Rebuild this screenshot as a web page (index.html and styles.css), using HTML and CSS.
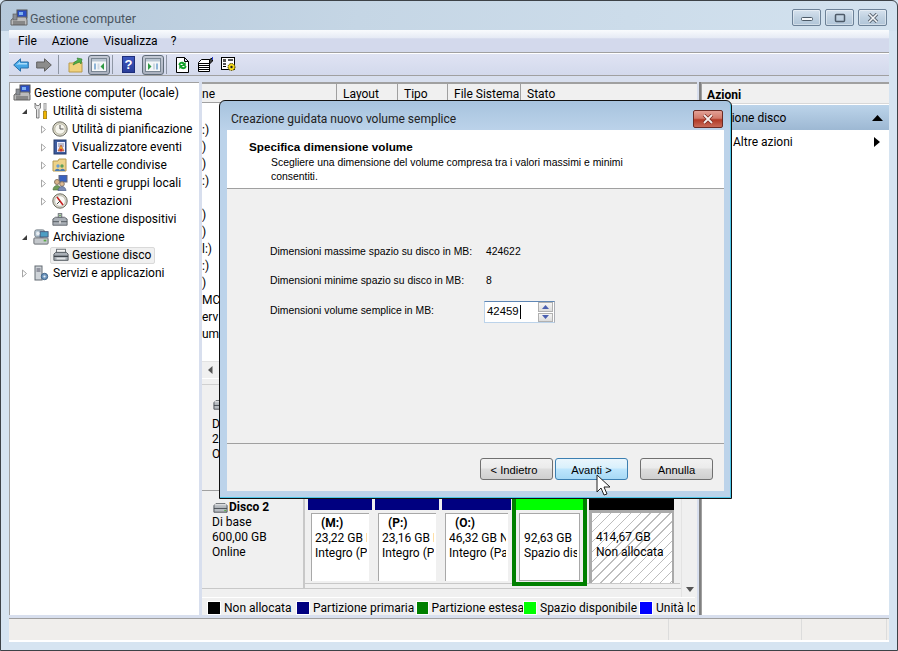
FILE: index.html
```html
<!DOCTYPE html>
<html lang="it">
<head>
<meta charset="utf-8">
<title>Gestione computer</title>
<link rel="stylesheet" href="styles.css">
</head>
<body>
<svg class="sprite" width="0" height="0" aria-hidden="true">
  <symbol id="i-pc" viewBox="0 0 18 18">
    <rect x="7" y="1" width="10" height="8" fill="#2b4fc4" stroke="#555"/>
    <rect x="9" y="3" width="4" height="3" fill="#7fb2f0"/>
    <path d="M1 11l4-3h11l1 3v5H1z" fill="#bbb" stroke="#666"/>
    <rect x="3" y="5" width="4" height="6" fill="#8a8f96" stroke="#555" stroke-width=".6"/>
    <path d="M3 13h12M3 15h12" stroke="#555"/>
  </symbol>
  <symbol id="i-tools" viewBox="0 0 16 16">
    <path d="M2 0v5l1.500 1.500V15h2.500V6.500L7.500 5V0L6 2.500H3.500z" fill="#e4e4e4" stroke="#666" stroke-width=".8"/>
    <path d="M11 0h2v7h-2z" fill="#eee" stroke="#777" stroke-width=".7"/>
    <path d="M10.500 8h3v8h-3z" fill="#f0b400" stroke="#8a6a00" stroke-width=".7"/>
  </symbol>
  <symbol id="i-clock" viewBox="0 0 16 16">
    <circle cx="8" cy="8" r="7.200" fill="#dbd8c8" stroke="#6d6d62"/>
    <circle cx="8" cy="8" r="5.200" fill="#f7f6ee" stroke="#a5a28f" stroke-width=".6"/>
    <path d="M8 4v4h3.500" fill="none" stroke="#555" stroke-width="1"/>
  </symbol>
  <symbol id="i-log" viewBox="0 0 16 16">
    <rect x="2" y="1" width="12" height="14" fill="#3d5c9e" stroke="#243a6c"/>
    <rect x="5" y="3" width="8" height="10" fill="#eef"/>
    <path d="M6 5h6M6 7h6" stroke="#889"/>
    <path d="M9 6l3 6H6z" fill="#f2c230" stroke="#a33" stroke-width=".6"/>
    <circle cx="9" cy="11" r="1.600" fill="#c33"/>
  </symbol>
  <symbol id="i-share" viewBox="0 0 16 16">
    <path d="M1 4h5l1-2h7v12H1z" fill="#eed389" stroke="#b59a50"/>
    <circle cx="6" cy="9" r="1.700" fill="#6a9fd0"/>
    <circle cx="10" cy="9" r="1.700" fill="#5ca05c"/>
    <path d="M3 14c0-3 5-3 5 0zM8 14c0-3 5-3 5 0z" fill="#4a7ab0"/>
  </symbol>
  <symbol id="i-users" viewBox="0 0 16 16">
    <rect x="7" y="0" width="8" height="7" fill="#3a63c0" stroke="#667"/>
    <circle cx="5" cy="7" r="2.500" fill="#d8b48a" stroke="#876"/>
    <path d="M1 15c0-6 8-6 8 0z" fill="#6f9c5a" stroke="#4a6a3a" stroke-width=".6"/>
    <circle cx="10" cy="9" r="2.300" fill="#e0bd95" stroke="#876"/>
    <path d="M6 16c0-6 8-6 8 0z" fill="#7c8cb4" stroke="#4c5a80" stroke-width=".6"/>
  </symbol>
  <symbol id="i-perf" viewBox="0 0 16 16">
    <circle cx="8" cy="8" r="7.200" fill="#d9d6c6" stroke="#6d6d62"/>
    <circle cx="8" cy="8" r="5.300" fill="#fbfaf5" stroke="#aaa" stroke-width=".6"/>
    <path d="M5 4l6 8" stroke="#c62020" stroke-width="1.500"/>
    <path d="M5 11l3-3" stroke="#444"/>
  </symbol>
  <symbol id="i-dev" viewBox="0 0 18 16">
    <path d="M1 8l3-2h10l3 2v7H1z" fill="#a9afb6" stroke="#5c6268"/>
    <path d="M1 11h16" stroke="#4f555b"/>
    <rect x="7" y="2" width="4" height="4" fill="#dfe3e8" stroke="#5c6268"/>
    <rect x="8" y="10" width="2" height="3" fill="#d8d8d8"/>
    <circle cx="9" cy="4" r="1" fill="#5a9c4a"/>
  </symbol>
  <symbol id="i-printer" viewBox="0 0 18 16">
    <rect x="4" y="1.500" width="10" height="4" fill="#f4f4f4" stroke="#5c6268"/>
    <path d="M1 7l2-2h12l2 2v7H1z" fill="#a9afb6" stroke="#4c5258"/>
    <path d="M1 9.500h16" stroke="#3f454b" stroke-width="1.500"/>
    <rect x="4" y="11" width="10" height="2" fill="#e2e4e6"/>
  </symbol>
  <symbol id="i-store" viewBox="0 0 18 18">
    <rect x="1" y="10" width="16" height="7" rx="1" fill="#c3c7cb" stroke="#5c6268"/>
    <rect x="12" y="12" width="3" height="2" fill="#5cab4a"/>
    <rect x="2" y="1" width="11" height="8" rx="2" fill="#b8c9d6" stroke="#68737c"/>
    <rect x="8" y="3" width="9" height="6" fill="#4d9ec4" stroke="#457"/>
    <circle cx="5.500" cy="5" r="2" fill="#e8eef2"/>
  </symbol>
  <symbol id="i-disk" viewBox="0 0 18 16">
    <path d="M2 6l2-2h10l2 2v7H2z" fill="#b7bcc1" stroke="#4c5157"/>
    <path d="M2 9h14" stroke="#444a50"/>
    <path d="M3 5h12" stroke="#eee"/>
    <rect x="13" y="10.500" width="2" height="1.500" fill="#58b04a"/>
  </symbol>
  <symbol id="i-serv" viewBox="0 0 16 16">
    <rect x="2" y="1" width="7" height="14" fill="#cfd4d9" stroke="#636a72"/>
    <path d="M3.500 4h4M3.500 6h4" stroke="#556"/>
    <circle cx="11.500" cy="11.500" r="3.200" fill="#6f97bf" stroke="#3d6186"/>
    <circle cx="11.500" cy="11.500" r="1.100" fill="#e7eef5"/>
  </symbol>
</svg>

<div class="window">
  <header class="titlebar">
    <svg class="ico18 title-ico"><use href="#i-pc"/></svg>
    <span class="title-text">Gestione computer</span>
    <div class="caption-btns">
      <span class="cap"><svg width="12" height="8" viewBox="0 0 12 8"><rect x=".5" y="3.500" width="11" height="3" rx="1" fill="#f4f7fa" stroke="#4d5a68"/></svg></span>
      <span class="cap"><svg width="12" height="10" viewBox="0 0 12 10"><rect x="1.500" y="1.500" width="9" height="7" rx="1" fill="none" stroke="#4d5a68" stroke-width="1.500"/></svg></span>
      <span class="cap"><svg width="14" height="10" viewBox="0 0 14 10"><path d="M3 1l8 8M11 1L3 9" stroke="#5a6572" stroke-width="3.400"/><path d="M3 1l8 8M11 1L3 9" stroke="#f3f6f9" stroke-width="1.600"/></svg></span>
    </div>
  </header>

  <nav class="menubar">
    <span class="menu-item">File</span>
    <span class="menu-item">Azione</span>
    <span class="menu-item menu-view">Visualizza</span>
    <span class="menu-item">?</span>
  </nav>

  <div class="toolbar">
    <svg class="tb-arrow" width="16" height="14" viewBox="0 0 16 14"><path d="M.7 7L7.500.8V4H15.300V10H7.500V13.200z" fill="#45a6e6" stroke="#2b6fa8"/><path d="M3 7l4-3.500V5h7v1.500H5z" fill="#a9dcfa"/></svg>
    <svg class="tb-arrow tb-next" width="16" height="14" viewBox="0 0 16 14"><path d="M15.300 7L8.500.8V4H.7V10H8.500V13.200z" fill="#8c8c8c" stroke="#5f5f5f"/></svg>
    <span class="tb-sep"></span>
    <svg class="tb-folder" width="15" height="16" viewBox="0 0 15 16"><path d="M1 6h4l1-1h8v10H1z" fill="#f1d27d" stroke="#b99b4c"/><path d="M5 8c1-3 3-4 5-5L9 1l5 1-1 5-1.500-2C9 6 7 7 5 8z" fill="#4fb04a" stroke="#2d7a2b" stroke-width=".6"/></svg>
    <span class="tb-toggle">
      <svg width="16" height="14" viewBox="0 0 16 14"><rect x=".5" y=".5" width="15" height="13" fill="#f4f6f8" stroke="#7b8794"/><rect x="1" y="1" width="14" height="2.500" fill="#b9c5d2"/><path d="M3 5.500h2v6H3z" fill="#8fb5d8"/><path d="M6.500 5.500h2v6h-2z" fill="#cfd8e2"/><path d="M13 5v7L9.500 8.500z" fill="#2f9a44"/></svg>
    </span>
    <span class="tb-sep tb-sep-tight"></span>
    <span class="tb-help">?</span>
    <span class="tb-toggle tb-toggle-right">
      <svg width="16" height="14" viewBox="0 0 16 14"><rect x=".5" y=".5" width="15" height="13" fill="#f4f6f8" stroke="#7b8794"/><rect x="1" y="1" width="14" height="2.500" fill="#b9c5d2"/><path d="M3 5v7l3.500-3.500z" fill="#2f9a44"/><path d="M8 5.500h2v6H8z" fill="#cfd8e2"/><path d="M11 5.500h2v6h-2z" fill="#8fb5d8"/></svg>
    </span>
    <span class="tb-sep tb-sep-tight"></span>
    <svg class="tb-refresh" width="13" height="16" viewBox="0 0 13 16"><path d="M.5.500h8l4 4v11H.5zM8.500.500v4h4" fill="#fff" stroke="#000"/><path d="M2.500 8C2.500 4.500 7 4 8.500 6l1.200-1.200V9H5.500l1.500-1.500C6 6.500 4.500 6.500 4.500 8zM10.500 9c0 3.500-4.500 4-6 2l-1.200 1.200V8h4.200L6 9.500c1 1 2.500 1 2.500-.5z" fill="#14a02a"/></svg>
    <svg class="tb-props" width="16" height="15" viewBox="0 0 16 15"><path d="M.5 5.500l3-3h8v12H.5z" fill="#fff" stroke="#000"/><path d="M1 6.500h10M1 8.500h10M1 10.500h10M1 12.500h10" stroke="#000"/><path d="M11.500 2.500l3-1.500v3l-3 3z" fill="#444" stroke="#000"/><path d="M14.500 0v3" stroke="#2a3fd0"/></svg>
    <svg class="tb-gear" width="16" height="15" viewBox="0 0 16 15"><rect x=".5" y=".5" width="13" height="12" fill="#fff" stroke="#000"/><rect x="2" y="2" width="3" height="3" fill="#555"/><rect x="7" y="2" width="5" height="2" fill="#555"/><rect x="2" y="6" width="3" height="2" fill="#555"/><path d="M2 9.500h3" stroke="#000"/><circle cx="10.500" cy="10" r="3.500" fill="#f6dc1e" stroke="#3f3600" stroke-dasharray="1.500 .8"/><circle cx="10.500" cy="10" r="1.200" fill="#222"/></svg>
  </div>

  <main class="panes">
    <aside class="tree">
      <div class="row lv0"><svg class="ico18"><use href="#i-pc"/></svg><span>Gestione computer (locale)</span></div>
      <div class="row lv1"><svg class="arrow" viewBox="0 0 7 7"><path d="M6 1v5H1z" fill="#3c3c3c"/></svg><svg class="ico16"><use href="#i-tools"/></svg><span>Utilità di sistema</span></div>
      <div class="row lv2"><svg class="arrow" viewBox="0 0 7 9"><path d="M1.500 1l4 3.500-4 3.500z" fill="#fff" stroke="#a6a6a6"/></svg><svg class="ico16"><use href="#i-clock"/></svg><span>Utilità di pianificazione</span></div>
      <div class="row lv2"><svg class="arrow" viewBox="0 0 7 9"><path d="M1.500 1l4 3.500-4 3.500z" fill="#fff" stroke="#a6a6a6"/></svg><svg class="ico16"><use href="#i-log"/></svg><span>Visualizzatore eventi</span></div>
      <div class="row lv2"><svg class="arrow" viewBox="0 0 7 9"><path d="M1.500 1l4 3.500-4 3.500z" fill="#fff" stroke="#a6a6a6"/></svg><svg class="ico16"><use href="#i-share"/></svg><span>Cartelle condivise</span></div>
      <div class="row lv2"><svg class="arrow" viewBox="0 0 7 9"><path d="M1.500 1l4 3.500-4 3.500z" fill="#fff" stroke="#a6a6a6"/></svg><svg class="ico16"><use href="#i-users"/></svg><span>Utenti e gruppi locali</span></div>
      <div class="row lv2"><svg class="arrow" viewBox="0 0 7 9"><path d="M1.500 1l4 3.500-4 3.500z" fill="#fff" stroke="#a6a6a6"/></svg><svg class="ico16"><use href="#i-perf"/></svg><span>Prestazioni</span></div>
      <div class="row lv2"><span class="arrow"></span><svg class="ico16"><use href="#i-dev"/></svg><span>Gestione dispositivi</span></div>
      <div class="row lv1"><svg class="arrow" viewBox="0 0 7 7"><path d="M6 1v5H1z" fill="#3c3c3c"/></svg><svg class="ico16"><use href="#i-store"/></svg><span>Archiviazione</span></div>
      <div class="row lv2 sel"><span class="arrow"></span><div class="sel-box"><svg class="ico16"><use href="#i-printer"/></svg><span>Gestione disco</span></div></div>
      <div class="row lv1"><svg class="arrow" viewBox="0 0 7 9"><path d="M1.500 1l4 3.500-4 3.500z" fill="#fff" stroke="#a6a6a6"/></svg><svg class="ico16"><use href="#i-serv"/></svg><span>Servizi e applicazioni</span></div>
    </aside>

    <section class="center">
      <div class="list">
        <div class="list-head">
          <span class="hc hc-name">ne</span>
          <span class="hc hc-layout">Layout</span>
          <span class="hc hc-tipo">Tipo</span>
          <span class="hc hc-fs">File Sistema</span>
          <span class="hc hc-stato">Stato</span>
        </div>
        <div class="list-body">
          <div class="lrow"></div>
          <div class="lrow">:)</div>
          <div class="lrow">)</div>
          <div class="lrow">)</div>
          <div class="lrow">:)</div>
          <div class="lrow"></div>
          <div class="lrow">)</div>
          <div class="lrow">)</div>
          <div class="lrow">l:)</div>
          <div class="lrow">:)</div>
          <div class="lrow">)</div>
          <div class="lrow">MC</div>
          <div class="lrow">erv</div>
          <div class="lrow">um</div>
        </div>
        <div class="hscroll"><svg width="5" height="8" viewBox="0 0 5 8"><path d="M4.500 0v8L0 4z" fill="#555"/></svg></div>
      </div>

      <div class="disks">
        <div class="disk-rows">
          <div class="disk disk1">
            <div class="disk-info">
              <svg class="ico-disk ico-disk-up"><use href="#i-disk"/></svg>
              <div>D</div><div>2.</div><div>O</div>
            </div>
          </div>
          <div class="disk disk2">
            <div class="disk-info">
              <div class="disk-name"><svg class="ico-disk"><use href="#i-disk"/></svg><b>Disco 2</b></div>
              <div>Di base</div>
              <div>600,00 GB</div>
              <div>Online</div>
            </div>
            <div class="vols">
              <div class="vol w-m"><div class="vbar navy"></div><div class="vbody"><b>(M:)</b><span>23,22 GB NTFS</span><span>Integro (Partizione)</span></div></div>
              <div class="vol w-p"><div class="vbar navy"></div><div class="vbody"><b>(P:)</b><span>23,16 GB NTFS</span><span>Integro (Partizione)</span></div></div>
              <div class="vol w-o"><div class="vbar navy"></div><div class="vbody"><b>(O:)</b><span>46,32 GB NTFS</span><span>Integro (Partizione)</span></div></div>
              <div class="vol w-g ext"><div class="vbar lime"></div><div class="vbody"><b>&nbsp;</b><span>92,63 GB</span><span>Spazio disponibile</span></div></div>
              <div class="vol w-u"><div class="vbar black"></div><div class="vbody hatch"><b>&nbsp;</b><span>414,67 GB</span><span>Non allocata</span></div></div>
            </div>
          </div>
        </div>
        <div class="vscroll"><svg width="8" height="5" viewBox="0 0 8 5"><path d="M0 0h8L4 5z" fill="#555"/></svg></div>
      </div>

      <div class="legend">
        <span class="lg lg-1"><i class="sw black"></i>Non allocata</span>
        <span class="lg lg-2"><i class="sw navy"></i>Partizione primaria</span>
        <span class="lg lg-3"><i class="sw green"></i>Partizione estesa</span>
        <span class="lg lg-4"><i class="sw lime"></i>Spazio disponibile</span>
        <span class="lg"><i class="sw blue"></i>Unità logica</span>
      </div>
    </section>

    <aside class="actions">
      <div class="act-head">Azioni</div>
      <div class="act-band"><span>Gestione disco</span><svg width="11" height="6" viewBox="0 0 11 6"><path d="M5.500 0L11 6H0z" fill="#000"/></svg></div>
      <div class="act-item"><span>Altre azioni</span><svg width="6" height="10" viewBox="0 0 6 10"><path d="M0 0l6 5-6 5z" fill="#000"/></svg></div>
    </aside>
  </main>

  <footer class="statusbar">
    <span class="st st1"></span>
    <span class="st st2"></span>
    <span class="st st3"></span>
  </footer>
</div>

<div class="dialog">
  <div class="dlg-title">
    <span>Creazione guidata nuovo volume semplice</span>
    <span class="dlg-close"><svg width="14" height="10" viewBox="0 0 14 10"><path d="M3 1l8 8M11 1L3 9" stroke="#7a2a20" stroke-width="3.400"/><path d="M3 1l8 8M11 1L3 9" stroke="#f6f0ee" stroke-width="1.800"/></svg></span>
  </div>
  <div class="dlg-client">
    <div class="dlg-head">
      <div class="dlg-h1">Specifica dimensione volume</div>
      <div class="dlg-h2">Scegliere una dimensione del volume compresa tra i valori massimi e minimi<br>consentiti.</div>
    </div>
    <div class="dlg-body">
      <div class="field"><span class="f-label">Dimensioni massime spazio su disco in MB:</span><span>424622</span></div>
      <div class="field"><span class="f-label">Dimensioni minime spazio su disco in MB:</span><span>8</span></div>
      <div class="field field-input">
        <span class="f-label">Dimensioni volume semplice in MB:</span>
        <div class="spin">
          <span class="spin-text">42459<i class="caret"></i></span>
          <div class="spin-btns">
            <span class="spin-btn"><svg width="7" height="4" viewBox="0 0 7 4"><path d="M3.500 0L7 4H0z" fill="#4a5fb0"/></svg></span>
            <span class="spin-btn"><svg width="7" height="4" viewBox="0 0 7 4"><path d="M0 0h7L3.500 4z" fill="#4a5fb0"/></svg></span>
          </div>
        </div>
      </div>
    </div>
    <div class="dlg-foot">
      <span class="btn btn-back">&lt; Indietro</span>
      <span class="btn btn-hot">Avanti &gt;</span>
      <span class="btn btn-cancel">Annulla</span>
    </div>
  </div>
</div>

<svg class="cursor" width="16" height="23" viewBox="0 0 16 23"><path d="M1 1v17l4-4 3 7 3-1-3-7h6z" fill="#fff" stroke="#222"/></svg>
</body>
</html>
```
FILE: styles.css
```css
* { box-sizing: border-box; }
html, body { margin: 0; padding: 0; }
body { width: 898px; height: 651px; overflow: hidden; position: relative; background: #d6e4f1; font-family: "Roboto", sans-serif; font-size: 12px; color: #000; }
.sprite { position: absolute; }
svg { display: block; flex: none; }
.ico18 { width: 18px; height: 18px; }
.ico16 { width: 16px; height: 16px; }

.window { width: 898px; height: 651px; display: flex; flex-direction: column; border: 1px solid #3d4247; border-radius: 6px 6px 0 0; padding: 0 8px 8px; background: linear-gradient(100deg, #b5c8da 0, #c5d6e5 40%, #d3e2ef 100%) top/100% 30px no-repeat, #d6e4f1; }

.titlebar { height: 29px; flex: none; display: flex; align-items: center; padding-top: 5px; }
.title-ico { margin: 0 2px 0 1px; }
.title-text { color: #4a5560; font-size: 12.500px; }
.caption-btns { margin-left: auto; display: flex; gap: 4px; margin-right: 2px; margin-top: -1px; }
.cap { width: 29px; height: 17px; border: 1px solid #6c8197; border-radius: 2px; background: linear-gradient(#d6e2ee, #c0d1e1 50%, #b1c5d8); display: flex; align-items: center; justify-content: center; box-shadow: inset 0 0 0 1px rgba(255,255,255,.4); }

.menubar { height: 23px; flex: none; display: flex; align-items: center; background: linear-gradient(#f9fbfd 0, #e6ebf5 35%, #d3d9ec 40%, #d3d9ec 100%); border-bottom: 1px solid #a0a0a0; padding-left: 9px; }
.menu-item { margin-right: 15px; }
.menu-view { margin-right: 13px; }
.toolbar { height: 23px; flex: none; display: flex; align-items: center; background: linear-gradient(#dfe3f3, #d3d9ec); border-top: 1px solid #fff; border-bottom: 1px solid #a0a0a0; padding-left: 4px; }
.tb-next { margin-left: 7px; }
.tb-sep { width: 1px; height: 19px; background: #8f97a5; margin-left: 6px; }
.tb-sep-tight { margin-left: 2px; }
.tb-folder { margin-left: 9px; }
.tb-toggle { width: 22px; height: 20px; margin-left: 5px; border: 1px solid #5f6b78; border-radius: 3px; background: linear-gradient(#c2c8d4, #aab1bf); display: flex; align-items: center; justify-content: center; }
.tb-help { width: 13px; height: 17px; margin-left: 9px; background: linear-gradient(#3c57c0, #2a3d99); border: 1px solid #1d2d7a; color: #fff; font: bold 13px/15px "Liberation Sans", sans-serif; text-align: center; }
.tb-toggle-right { margin-left: 7px; }
.tb-refresh { margin-left: 9px; }
.tb-props { margin-left: 9px; }
.tb-gear { margin-left: 7px; }

.panes { flex: 1; min-height: 0; display: flex; padding-top: 6px; background: #d8dfee; }
.tree { width: 190px; flex: none; background: #fff; border-top: 1px solid #a0a0a0; border-left: 1px solid #a0a0a0; padding-top: 1px; overflow: hidden; margin-bottom: 3px; }
.row { height: 18px; display: flex; align-items: center; white-space: nowrap; font-size: 12px; }
.lv0 { padding-left: 3px; gap: 3px; }
.lv1 { padding-left: 11px; }
.lv2 { padding-left: 30px; }
.arrow { width: 7px; height: 9px; margin-right: 5px; flex: none; }
.row > .ico16 { margin-right: 4px; }
.sel-box { display: flex; align-items: center; margin-left: -2px; padding: 0 3px 0 2px; height: 17px; background: #f0f0f0; border: 1px solid #d9d9d9; border-radius: 2px; gap: 3px; }

.center { width: 495px; flex: none; margin-left: 3px; display: flex; flex-direction: column; background: #f0f0f0; margin-bottom: 3px; border-top: 2px solid #a0a0a0; overflow: hidden; }
.list { height: 301px; flex: none; display: flex; flex-direction: column; background: #f0f0f0; border-bottom: 1px solid #d0d0d0; }
.list-head { height: 19px; flex: none; display: flex; background: #f0f0f0; border-bottom: 1px solid #a0a0a0; }
.hc { padding-left: 6px; line-height: 20px; border-right: 1px solid #a0a0a0; overflow: hidden; }
.hc-name { width: 135px; padding-left: 0; }
.hc-layout { width: 61px; }
.hc-tipo { width: 50px; }
.hc-fs { width: 73px; }
.hc-stato { flex: 1; border-right: 0; }
.list-body { flex: 1; min-height: 0; overflow: hidden; background: #fff; padding-top: 1px; }
.lrow { height: 17px; line-height: 18px; }
.hscroll { height: 18px; flex: none; margin-bottom: 5px; background: #f0f0f0; border-top: 1px solid #e3e3e3; border-bottom: 1px solid #fff; display: flex; align-items: center; padding-left: 6px; }

.disks { height: 212px; flex: none; display: flex; }
.disk-rows { flex: 1; min-width: 0; display: flex; flex-direction: column; }
.vscroll { width: 16px; flex: none; background: #f0f0f0; border-left: 1px solid #e3e3e3; display: flex; align-items: flex-end; justify-content: center; padding-bottom: 5px; }
.disk { display: flex; flex: none; }
.disk1 { height: 106px; padding-top: 9px; border-bottom: 1px solid #a0a0a0; }
.disk2 { height: 98px; border-bottom: 1px solid #c8c8c8; }
.disk-info { width: 103px; flex: none; padding: 9px 0 0 10px; line-height: 15px; border-right: 2px solid #c8c8c8; }
.disk1 .disk-info { border: 0; padding-top: 6px; }
.ico-disk { width: 17px; height: 15px; }
.ico-disk-up { margin: -3px 0 5px; }
.disk-name { display: flex; align-items: center; height: 15px; }
.vols { flex: none; height: 93px; width: 375px; display: flex; padding: 7px 0 0 3px; align-items: flex-start; border-bottom: 1px solid #c8c8c8; }
.vol { flex: none; height: 85px; overflow: hidden; }
.w-m, .w-p { width: 64px; margin-right: 3px; }
.w-o { width: 69px; margin-right: 1px; }
.w-g { width: 75px; margin-right: 2px; }
.w-u { width: 85px; }
.vbar { height: 12px; }
.navy { background: #000080; }
.lime { background: #00ff00; }
.black { background: #000; }
.green { background: #008000; }
.blue { background: #0000ff; }
.vbody { margin: 3px 3px 0; width: calc(100% - 6px); height: 68px; padding: 2px 0 0 3px; background: #fff; border: 1px solid #a8a8a8; border-width: 1px 0 0 1px; display: flex; flex-direction: column; line-height: 15px; overflow: hidden; white-space: nowrap; }
.vbody span { display: block; overflow: hidden; width: calc(100% - 2px); }
.vbody b { padding-left: 6px; }
.ext { background: #f0f0f0; border: solid #008000; border-width: 0 4px 4px; height: 88px; padding: 0; }
.ext .vbody { margin: 3px 3px 0; width: calc(100% - 6px); border-width: 1px; height: 68px; padding: 2px 0 0 4px; }
.vol.w-u { height: 85px; background: #aaa; }
.vbody.hatch { margin: 3px 3px 0; width: calc(100% - 5px); border: 0; padding: 2px 0 0 4px; height: 70px; background: repeating-linear-gradient(135deg, #fff 0 6px, #bdbdbd 6px 7px); }
.vbody.hatch span { width: auto; }

.legend { height: 21px; flex: none; display: flex; align-items: center; padding-left: 6px; border-top: 1px solid #fff; background: #f0f0f0; white-space: nowrap; overflow: hidden; width: 493px; }
.lg { display: flex; flex: none; align-items: center; gap: 4px; }
.lg-1 { width: 89px; }
.lg-2 { width: 120px; }
.lg-3 { width: 107px; }
.lg-4 { width: 116px; }
.sw { width: 12px; height: 12px; display: block; outline: 1px solid #fff; }

.actions { width: 188px; flex: none; margin-left: 4px; background: #fff; border-top: 2px solid #a0a0a0; border-left: 1px solid #a0a0a0; margin-bottom: 3px; position: relative; }
.actions::before { content: ""; position: absolute; left: -3px; top: -2px; bottom: 0; width: 2px; background: #808080; }
.act-head { height: 20px; line-height: 22px; padding-left: 5px; font-weight: 700; background: #f0f0f0; border-bottom: 1px solid #d8d8d8; }
.act-band { height: 25px; display: flex; align-items: center; justify-content: space-between; padding: 0 6px 0 0; background: linear-gradient(#bcd4ea, #9db8d3); margin-top: 1px; }
.act-band span { padding-left: 5px; }
.act-item { height: 23px; display: flex; align-items: center; justify-content: space-between; padding: 0 9px 0 31px; }

.statusbar { height: 24px; flex: none; display: flex; border-top: 1px solid #a0a0a0; border-bottom: 2px solid #fff; background: #f0eeec; }
.st { border-right: 1px solid #dcdcdc; }
.st1 { width: 660px; }
.st2 { width: 133px; }
.st3 { width: 85px; }

.dialog { position: absolute; left: 219px; top: 100px; width: 513px; height: 399px; border: 1px solid #111; border-radius: 6px 6px 0 0; padding: 0 7px 7px; background: linear-gradient(#a7c3de 0, #bcd3ea 30px, #bcd3ea); box-shadow: inset -1px -1px 0 #4ec6e8; display: flex; flex-direction: column; font-family: "Liberation Sans", sans-serif; font-size: 10.400px; }
.dlg-title { height: 29px; flex: none; display: flex; align-items: center; justify-content: space-between; font-family: "Roboto", sans-serif; font-size: 12px; color: #222; padding: 7px 0 0 4px; }
.dlg-close { width: 30px; height: 18px; margin-right: 1px; border: 1px solid #6a2b24; border-radius: 2px; background: linear-gradient(#e3a196, #d27a6a 45%, #b23a26 55%, #c86a58); display: flex; align-items: center; justify-content: center; }
.dlg-client { flex: 1; min-height: 0; display: flex; flex-direction: column; background: #f0f0f0; }
.dlg-head { height: 59px; flex: none; background: #fff; border-bottom: 1px solid #a0a0a0; padding: 10px 0 0 22px; }
.dlg-h1 { font-weight: 700; font-size: 11.700px; line-height: 14px; }
.dlg-h2 { padding-left: 22px; line-height: 14px; margin-top: 2px; }
.dlg-body { flex: 1; min-height: 0; border-bottom: 1px solid #a0a0a0; padding: 48px 0 0 43px; }
.field { display: flex; height: 29px; align-items: center; }
.f-label { width: 216px; }
.field-input { height: 30px; }
.spin { width: 71px; height: 22px; margin: 6px 0 0 -2px; align-self: flex-start; display: flex; background: #fff; border: 1px solid #abadb3; border-top-color: #5f87b5; border-left-color: #bcd3ea; border-bottom-color: #bcd3ea; }
.spin-text { flex: 1; padding: 3px 0 0 2px; font-size: 11.400px; display: flex; }
.caret { display: block; width: 1px; height: 14px; background: #000; margin-left: 1px; }
.spin-btns { width: 16px; display: flex; flex-direction: column; gap: 1px; padding: 0 1px 0 0; }
.spin-btn { height: 10px; background: linear-gradient(#f5f5f5, #dcdcdc); border: 1px solid #b0b0b0; display: flex; align-items: center; justify-content: center; }
.dlg-foot { height: 47px; flex: none; display: flex; padding: 14px 0 0 253px; }
.btn { width: 73px; height: 22px; padding-top: 1px; border: 1px solid #707070; border-radius: 3px; background: linear-gradient(#f2f2f2 0, #ebebeb 45%, #dddddd 50%, #cfcfcf 100%); display: flex; align-items: center; justify-content: center; margin-right: 2px; font-size: 11.200px; }
.btn-back { padding-right: 5px; }
.btn-hot { border-color: #3c7fb1; background: linear-gradient(#eaf6fd 0, #d9f0fc 45%, #bee6fd 50%, #a7d9f5 100%); }
.btn-cancel { margin-left: 10px; }

.cursor { position: absolute; left: 596px; top: 474px; }
```
